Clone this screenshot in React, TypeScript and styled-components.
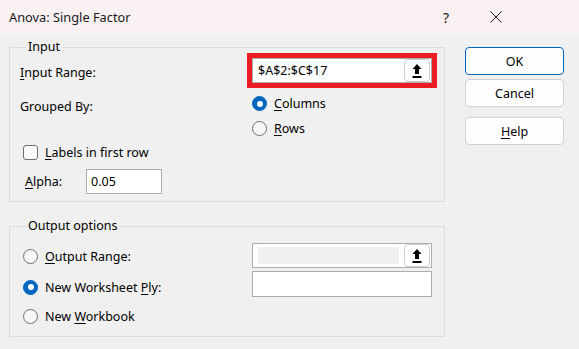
import React from "react";
import styled, { createGlobalStyle } from "styled-components";

const GlobalStyle = createGlobalStyle`
  html, body { margin: 0; padding: 0; background: #f0f0f0; }
  body { font-family: "Noto Sans", "Open Sans", sans-serif; color: #000; }
  * { box-sizing: border-box; }
`;

const Window = styled.div`
  width: 579px;
  height: 349px;
  background: #f0f0f0;
  overflow: hidden;
  font-size: 12.5px;
`;

const TitleBar = styled.div`
  height: 34px;
  background: #f8f0f1;
  display: flex;
  align-items: center;
  padding-left: 9px;
`;

const Title = styled.div`
  flex: 1;
  font-size: 12.8px;
  color: #1a1a1a;
`;

const TitleGlyph = styled.div`
  width: 50px;
  display: flex;
  justify-content: center;
  font-size: 14px;
  color: #1a1a1a;
`;

const CloseGlyph = styled.div`
  width: 50px;
  margin-right: 58px;
  display: flex;
  justify-content: center;
  align-items: center;
`;

const Body = styled.div`
  display: flex;
  padding: 7px 0 0 9px;
`;

const LeftCol = styled.div`
  width: 436px;
  display: flex;
  flex-direction: column;
`;

const Group = styled.fieldset<{ $gapTop?: number }>`
  margin: ${(p) => p.$gapTop ?? 0}px 0 0 0;
  padding: 0 0 7px 10px;
  border: 1px solid #dcdcdc;
  min-width: 0;
`;

const Legend = styled.legend`
  padding: 0 2px;
  margin-left: 6px;
  line-height: 12px;
  font-size: 12.5px;
`;

const Row = styled.div<{ $h: number; $mt?: number; $pl?: number; $cols?: string }>`
  display: grid;
  grid-template-columns: ${(p) => p.$cols ?? "227px 1fr"};
  align-items: center;
  height: ${(p) => p.$h}px;
  margin-top: ${(p) => p.$mt ?? 0}px;
  padding-left: ${(p) => p.$pl ?? 0}px;
`;

const Label = styled.span<{ $pl?: number; $pt?: number }>`
  padding-left: ${(p) => p.$pl ?? 0}px;
  padding-top: ${(p) => p.$pt ?? 0}px;
  white-space: nowrap;
`;

const Key = styled.u`
  text-decoration: underline;
  text-underline-offset: 2px;
  text-decoration-thickness: 1px;
`;

const RedFrame = styled.div`
  width: 190px;
  height: 35px;
  border: 5px solid #ec1c24;
  display: flex;
`;

const Field = styled.div<{ $w?: number; $h?: number }>`
  width: ${(p) => p.$w ?? 180}px;
  height: ${(p) => p.$h ?? 25}px;
  border: 1px solid #adadad;
  background: #fff;
  display: flex;
  align-items: center;
  padding: 0 1px 0 5px;
  gap: 5px;
`;

const FieldText = styled.span`
  flex: 1;
  white-space: nowrap;
`;

const DisabledArea = styled.div`
  flex: 1;
  height: 17px;
  background: #f0f0f0;
`;

const PickButton = styled.div`
  width: 26px;
  height: 23px;
  border: 1px solid #cfcfcf;
  border-radius: 4px;
  background: #fdfdfd;
  display: flex;
  align-items: center;
  justify-content: center;
`;

const RadioLine = styled.div<{ $ml?: number; $pt?: number }>`
  display: flex;
  align-items: center;
  gap: 7px;
  margin-left: ${(p) => p.$ml ?? 0}px;
  padding-top: ${(p) => p.$pt ?? 0}px;
  white-space: nowrap;
`;

const RadioDot = styled.span<{ $on?: boolean }>`
  width: 15px;
  height: 15px;
  border-radius: 50%;
  flex: none;
  background: ${(p) => (p.$on ? "#0067c0" : "#f7f7f7")};
  border: 1px solid ${(p) => (p.$on ? "#0067c0" : "#6e6e6e")};
  display: flex;
  align-items: center;
  justify-content: center;
  &::after {
    content: "";
    display: ${(p) => (p.$on ? "block" : "none")};
    width: 6px;
    height: 6px;
    border-radius: 50%;
    background: #fff;
  }
`;

const CheckBox = styled.span`
  width: 15px;
  height: 15px;
  border: 1px solid #6e6e6e;
  border-radius: 3px;
  background: #fbfbfb;
  flex: none;
`;

const AlphaInput = styled.div`
  width: 76px;
  height: 25px;
  border: 1px solid #adadad;
  background: #fff;
  display: flex;
  align-items: center;
  padding-left: 4px;
`;

const RightCol = styled.div`
  margin-left: 20px;
  padding-top: 6px;
  display: flex;
  flex-direction: column;
`;

const Button = styled.div<{ $primary?: boolean; $mt?: number }>`
  width: 99px;
  height: 28px;
  margin-top: ${(p) => p.$mt ?? 0}px;
  border: 1px solid ${(p) => (p.$primary ? "#0067c0" : "#d0d0d0")};
  border-radius: 4px;
  background: #fdfdfd;
  display: flex;
  align-items: center;
  justify-content: center;
`;

const UploadIcon = () => (
  <svg width="10" height="14" viewBox="0 0 10 14">
    <polygon points="5,0 9.5,5 7,5 7,10 3,10 3,5 0.5,5" fill="#000" />
    <rect x="0.5" y="12" width="9" height="2" fill="#000" />
  </svg>
);

const CloseIcon = () => (
  <svg width="12" height="12" viewBox="0 0 12 12">
    <path d="M0.5 0.5 L11.5 11.5 M11.5 0.5 L0.5 11.5" stroke="#1a1a1a" strokeWidth="1" />
  </svg>
);

export default function App() {
  return (
    <>
      <GlobalStyle />
      <Window>
        <TitleBar>
          <Title>Anova: Single Factor</Title>
          <TitleGlyph>?</TitleGlyph>
          <CloseGlyph>
            <CloseIcon />
          </CloseGlyph>
        </TitleBar>
        <Body>
          <LeftCol>
            <Group>
              <Legend>Input</Legend>
              <Row $h={35}>
                <Label $pt={3}>
                  <Key>I</Key>nput Range:
                </Label>
                <RedFrame>
                  <Field>
                    <FieldText>$A$2:$C$17</FieldText>
                    <PickButton>
                      <UploadIcon />
                    </PickButton>
                  </Field>
                </RedFrame>
              </Row>
              <Row $h={25} $mt={3}>
                <Label $pt={6}>Grouped By:</Label>
                <RadioLine $ml={5}>
                  <RadioDot $on />
                  <span>
                    <Key>C</Key>olumns
                  </span>
                </RadioLine>
              </Row>
              <Row $h={25}>
                <span />
                <RadioLine $ml={5}>
                  <RadioDot />
                  <span>
                    <Key>R</Key>ows
                  </span>
                </RadioLine>
              </Row>
              <Row $h={23} $pl={3} $cols="1fr">
                <RadioLine>
                  <CheckBox />
                  <span>
                    <Key>L</Key>abels in first row
                  </span>
                </RadioLine>
              </Row>
              <Row $h={25} $mt={5} $cols="66px 1fr">
                <Label $pl={5}>
                  <Key>A</Key>lpha:
                </Label>
                <AlphaInput>0.05</AlphaInput>
              </Row>
            </Group>
            <Group $gapTop={18}>
              <Legend>Output options</Legend>
              <Row $h={25} $mt={11} $pl={3} $cols="229px 1fr">
                <RadioLine $pt={2}>
                  <RadioDot />
                  <span>
                    <Key>O</Key>utput Range:
                  </span>
                </RadioLine>
                <Field>
                  <DisabledArea />
                  <PickButton>
                    <UploadIcon />
                  </PickButton>
                </Field>
              </Row>
              <Row $h={26} $mt={3} $pl={3} $cols="229px 1fr">
                <RadioLine $pt={6}>
                  <RadioDot $on />
                  <span>
                    New Worksheet <Key>P</Key>ly:
                  </span>
                </RadioLine>
                <Field $h={26} />
              </Row>
              <Row $h={26} $mt={6} $pl={3} $cols="1fr">
                <RadioLine>
                  <RadioDot />
                  <span>
                    New <Key>W</Key>orkbook
                  </span>
                </RadioLine>
              </Row>
            </Group>
          </LeftCol>
          <RightCol>
            <Button $primary>OK</Button>
            <Button $mt={4}>Cancel</Button>
            <Button $mt={10}>
              <span>
                <Key>H</Key>elp
              </span>
            </Button>
          </RightCol>
        </Body>
      </Window>
    </>
  );
}
